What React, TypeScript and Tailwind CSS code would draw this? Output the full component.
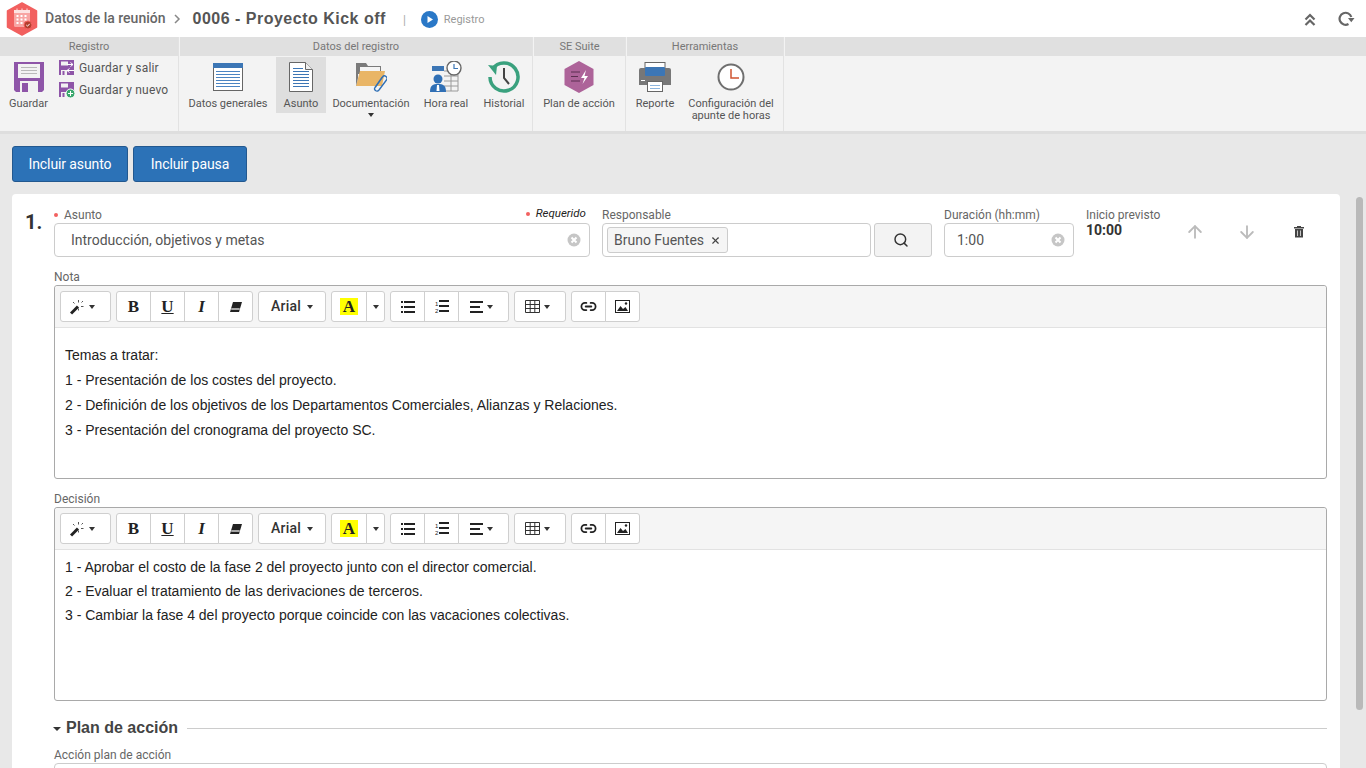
import React from 'react';
import { Search, X, ArrowUp, ArrowDown, Link2 } from 'lucide-react';

const SaveIcon = () => (
  <svg width="30" height="30" viewBox="0 0 30 30">
    <path d="M0 0h30v28l-2 2H2l-2-2z" fill="#8e55a8" />
    <rect x="4" y="2" width="22" height="14" fill="#f2f2f2" />
    <path d="M7 5.500h16M7 8.500h16M7 11.500h16" stroke="#b9b9b9" />
    <rect x="6" y="19" width="18" height="11" fill="#f2f2f2" />
    <rect x="8" y="21" width="6" height="9" fill="#8e55a8" />
  </svg>
);

const SmallSave = ({ plus }: { plus?: boolean }) => (
  <svg width="16" height="16" viewBox="0 0 16 16">
    <path d="M0 0h15v15H0z" fill="#8e55a8" />
    <rect x="2" y="1.500" width="7" height="4" fill="#f2f2f2" />
    <rect x="2" y="10" width="6" height="5" fill="#f2f2f2" />
    <rect x="3.500" y="11" width="2" height="4" fill="#8e55a8" />
    {plus ? (
      <g>
        <circle cx="11.500" cy="11.500" r="4.500" fill="#3aa76d" stroke="#fff" />
        <path d="M11.500 9v5M9 11.500h5" stroke="#fff" />
      </g>
    ) : (
      <path d="M8 4.500h6M11.500 2.500l2.500 2-2.500 2M15 10.500H8M10.500 8.500l-2.500 2 2.500 2" stroke="#fff" fill="none" />
    )}
  </svg>
);

const GeneralIcon = () => (
  <svg width="30" height="28" viewBox="0 0 30 28">
    <rect x="0.500" y="0.500" width="29" height="27" fill="#fff" stroke="#666" />
    <rect x="0" y="0" width="30" height="5" fill="#3c76b5" />
    <path d="M3 8.500h24M3 11.500h24M3 14.500h24M3 17.500h24M3 20.500h24M3 23.500h24" stroke="#4b84c2" />
  </svg>
);

const DocIcon = () => (
  <svg width="24" height="30" viewBox="0 0 24 30">
    <path d="M.5.500h16l7 7v22H.5z" fill="#fff" stroke="#666" />
    <path d="M16.500.500v7h7" fill="#eee" stroke="#666" />
    <path d="M4 6.500h10M4 9.500h16M4 12.500h16M4 15.500h16M4 18.500h16M4 21.500h16M4 24.500h16" stroke="#3c76b5" />
  </svg>
);

const FolderIcon = () => (
  <svg width="32" height="30" viewBox="0 0 32 30">
    <path d="M1 1h10l2 3h13v8H1z" fill="#7a7a7a" />
    <rect x="5" y="5" width="20" height="4" fill="#f4f4f4" />
    <path d="M1 24L5 9h25l-3 15z" fill="#e9b566" />
    <path d="M1 24V4h2v12z" fill="#7a7a7a" />
    <path d="M20.500 25l7-10a2.500 2.500 0 0 1 4 3l-7.500 10a2.200 2.200 0 0 1-4-2.500l7-10" fill="#f3f3f3" fillOpacity="0" stroke="#2f6fb5" strokeWidth="1.400" />
  </svg>
);

const RealTimeIcon = () => (
  <svg width="32" height="32" viewBox="0 0 32 32">
    <rect x="2" y="5" width="12" height="5" fill="#3c76b5" />
    <path d="M14 10h14v20H14M14 15h14M14 20h14M14 25h14M21 10v20" fill="none" stroke="#9a9a9a" />
    <circle cx="24" cy="7" r="7" fill="#fff" stroke="#666" strokeWidth="1.400" />
    <path d="M24 3v4.500h4" fill="none" stroke="#3c76b5" strokeWidth="1.200" />
    <circle cx="8" cy="18" r="4.500" fill="#2f6fb5" />
    <path d="M0 31c0-7 3-8 8-8s8 1 8 8z" fill="#2f6fb5" />
    <path d="M7 24h2l.5 6h-3z" fill="#fff" />
  </svg>
);

const HistoryIcon = () => (
  <svg width="32" height="32" viewBox="0 0 32 32">
    <path d="M4.500 8a14 14 0 1 1-2.500 8" fill="none" stroke="#3aa17e" strokeWidth="3.500" />
    <path d="M0 4l9 1-1 9z" fill="#3aa17e" />
    <path d="M16 7v10l5 6" fill="none" stroke="#444" strokeWidth="2" />
  </svg>
);

const PlanIcon = () => (
  <svg width="30" height="32" viewBox="0 0 30 32">
    <path d="M15 0l14.500 8v16L15 32 .5 24V8z" fill="#ad6399" />
    <path d="M7 11h9M7 15.500h7M7 20h9" stroke="#5b2f50" />
    <path d="M22 9l-5 8h3.500l-2 6 5.500-8h-3.500z" fill="#fff" />
  </svg>
);

const PrintIcon = () => (
  <svg width="32" height="30" viewBox="0 0 32 30">
    <rect x="6" y="0.500" width="20" height="8" fill="#fff" stroke="#666" />
    <path d="M2 6h28a2 2 0 0 1 2 2v15H0V8a2 2 0 0 1 2-2z" fill="#777" />
    <rect x="6" y="5" width="20" height="9" rx="1" fill="#3c76b5" />
    <rect x="2" y="18" width="4" height="1" fill="#fff" />
    <rect x="8.500" y="19.500" width="15" height="10" fill="#fff" stroke="#666" />
    <path d="M11 23.500h10M11 26.500h10" stroke="#8db6df" />
  </svg>
);

const ClockIcon = () => (
  <svg width="28" height="28" viewBox="0 0 28 28">
    <circle cx="14" cy="14" r="12.500" fill="#fff" stroke="#6f6f6f" strokeWidth="2" />
    <path d="M14 6v9h8" fill="none" stroke="#cf5430" strokeWidth="1.500" />
  </svg>
);

const LogoIcon = () => (
  <svg width="32" height="34" viewBox="0 0 32 34">
    <path d="M16 1l14.500 8v16L16 33 1.500 25V9z" fill="#f2605f" stroke="#f2605f" strokeLinejoin="round" strokeWidth="1.500" />
    <rect x="8" y="8" width="16" height="17" rx="1.500" fill="#f8a5a3" />
    <rect x="8" y="8" width="16" height="3" fill="#fde3e2" />
    <path d="M11 6.500v3M16 6.500v3M21 6.500v3" stroke="#fde3e2" />
    <path d="M10.500 14h2M14.500 14h2M18.500 14h2M10.500 17.500h2M14.500 17.500h2M18.500 17.500h2M10.500 21h2M14.500 21h2" stroke="#fff" strokeWidth="2" />
    <circle cx="22" cy="23" r="4" fill="#b33d2c" stroke="#f2605f" />
    <path d="M20.300 23l1.200 1.200 2.200-2.400" fill="none" stroke="#fff" />
  </svg>
);

const ClearIcon = () => (
  <svg width="14" height="14" viewBox="0 0 14 14" className="ml-auto shrink-0">
    <circle cx="7" cy="7" r="6.500" fill="#c6c6c6" />
    <path d="M4.500 4.500l5 5M9.500 4.500l-5 5" stroke="#fff" strokeWidth="2" />
  </svg>
);

const Wand = () => (
  <svg width="16" height="16" viewBox="0 0 16 16">
    <path d="M1 14.500l7-7" stroke="#222" strokeWidth="3" />
    <path d="M8.500 1v2.500M8.500 9.500v2M3 3l1.500 1.500M11.500 3.500L13 2M11 7.500h2.500" stroke="#555" strokeWidth="1" />
  </svg>
);

const EraserIcon = () => (
  <svg width="12" height="12" viewBox="0 0 12 12">
    <path d="M3 1h9L9 11H0z" fill="#222" />
    <path d="M1.200 8h8.500" stroke="#fff" strokeWidth="1.200" />
  </svg>
);

const ListIcon = () => (
  <svg width="14" height="12" viewBox="0 0 14 12" fill="#222">
    <rect x="0" y="0" width="2" height="2" />
    <rect x="0" y="5" width="2" height="2" />
    <rect x="0" y="10" width="2" height="2" />
    <rect x="3" y="0" width="11" height="2" />
    <rect x="3" y="5" width="11" height="2" />
    <rect x="3" y="10" width="11" height="2" />
  </svg>
);

const OrderedIcon = () => (
  <svg width="14" height="13" viewBox="0 0 14 13" fill="#222">
    <text x="0" y="6" fontSize="6" fontFamily="Liberation Sans">1</text>
    <text x="0" y="13" fontSize="6" fontFamily="Liberation Sans">2</text>
    <rect x="4" y="0" width="10" height="2" />
    <rect x="4" y="5" width="10" height="2" />
    <rect x="4" y="10" width="10" height="2" />
  </svg>
);

const AlignIcon = () => (
  <svg width="13" height="12" viewBox="0 0 13 12" fill="#222">
    <rect x="0" y="0" width="13" height="2" />
    <rect x="0" y="5" width="10" height="2" />
    <rect x="0" y="10" width="13" height="2" />
  </svg>
);

const GridIcon = () => (
  <svg width="15" height="13" viewBox="0 0 15 13">
    <path d="M.5.500h14v12H.5zM.5 4.500h14M.5 8.500h14M5.200.500v12M9.800.500v12" fill="none" stroke="#333" />
  </svg>
);

const PictureIcon = () => (
  <svg width="15" height="13" viewBox="0 0 15 13">
    <rect x="0.500" y="0.500" width="14" height="12" fill="#fff" stroke="#222" />
    <path d="M2 11l3.500-5 2.500 3 2.500-2 2.500 4z" fill="#222" />
    <circle cx="11" cy="3.500" r="1.200" fill="#222" />
  </svg>
);

const TrashIcon = () => (
  <svg width="10" height="12" viewBox="0 0 10 12" fill="#444">
    <rect x="0" y="1" width="10" height="1.500" />
    <rect x="3" y="0" width="4" height="1.500" />
    <path d="M1 3h8v8.500H1z" />
    <path d="M3.500 4.500v5.500M6.500 4.500v5.500" stroke="#fff" strokeWidth="0.700" />
  </svg>
);

const Refresh = () => (
  <svg width="18" height="16" viewBox="0 0 18 16">
    <path d="M10.500 13A6 6 0 1 1 13.300 6" fill="none" stroke="#666" strokeWidth="2.200" />
    <path d="M10 7h6.500l-3.250 4.200z" fill="#666" />
  </svg>
);

const DoubleUp = () => (
  <svg width="12" height="14" viewBox="0 0 12 14">
    <path d="M1.500 6.500L6 2l4.500 4.500M1.500 12L6 7.500l4.500 4.500" fill="none" stroke="#666" strokeWidth="2.200" />
  </svg>
);

const Caret = ({ className = '' }: { className?: string }) => (
  <span className={`inline-block w-0 h-0 border-x-[3px] border-x-transparent border-t-[4px] border-t-[#333] ${className}`} />
);

const RibbonButton = ({ label, icon, active, w, caret }: { label: React.ReactNode; icon: React.ReactNode; active?: boolean; w: string; caret?: boolean }) => (
  <div className={`flex flex-col items-center ${w}`}>
    <div className={`w-full h-[56px] flex flex-col items-center ${active ? 'bg-[#dedede]' : ''}`}>
      <div className="h-[38px] shrink-0 flex items-center justify-center mt-[1px]">{icon}</div>
      <div className="text-[11px] leading-[12px] text-[#555] text-center whitespace-nowrap mt-[2px]">{label}</div>
    </div>
    {caret && <Caret />}
  </div>
);

const RibbonGroup = ({ title, w, children }: { title: string; w: string; children: React.ReactNode }) => (
  <div className={`${w} shrink-0 flex flex-col border-r border-r-[#e2e2e2]`}>
    <div className="h-[19px] bg-[#e0e0e0] text-[11px] leading-[19px] text-[#777] text-center">{title}</div>
    <div className="flex-1 flex">{children}</div>
  </div>
);

const ToolBtn = ({ w, children, first, last, className = '' }: { w: string; children: React.ReactNode; first?: boolean; last?: boolean; className?: string }) => (
  <div className={`${w} h-[31px] bg-white border border-[#cfcfcf] flex items-center justify-center text-[#222] -ml-px first:ml-0 ${first ? 'rounded-l-[3px]' : ''} ${last ? 'rounded-r-[3px]' : ''} ${className}`}>
    {children}
  </div>
);

const serif = "font-['Liberation_Serif',serif] text-[17px] leading-[17px] text-[#222]";

const EditorToolbar = () => (
  <div className="h-[42px] shrink-0 bg-[#f5f5f5] border-b border-[#e2e2e2] rounded-t-[3px] flex items-start pt-[5px] pl-[5px] gap-[5px]">
    <div className="flex">
      <ToolBtn w="w-[51px]" first last className="pr-[7px]">
        <Wand />
        <Caret className="ml-[3px]" />
      </ToolBtn>
    </div>
    <div className="flex">
      <ToolBtn w="w-[35px]" first><span className={`${serif} font-bold`}>B</span></ToolBtn>
      <ToolBtn w="w-[35px]"><span className={`${serif} font-bold underline`}>U</span></ToolBtn>
      <ToolBtn w="w-[35px]"><span className={`${serif} font-bold italic`}>I</span></ToolBtn>
      <ToolBtn w="w-[35px]" last><EraserIcon /></ToolBtn>
    </div>
    <div className="flex">
      <ToolBtn w="w-[68px]" first last>
        <span className="text-[14px] font-medium text-[#333] mr-[6px] tracking-[0.200px]">Arial</span>
        <Caret />
      </ToolBtn>
    </div>
    <div className="flex">
      <ToolBtn w="w-[36px]" first>
        <span className={`${serif} font-bold px-[2.500px] bg-[#ffff00]`}>A</span>
      </ToolBtn>
      <ToolBtn w="w-[19px]" last><Caret /></ToolBtn>
    </div>
    <div className="flex">
      <ToolBtn w="w-[35px]" first><ListIcon /></ToolBtn>
      <ToolBtn w="w-[35px]"><OrderedIcon /></ToolBtn>
      <ToolBtn w="w-[51px]" last className="pr-[4px]">
        <AlignIcon />
        <Caret className="ml-[4px]" />
      </ToolBtn>
    </div>
    <div className="flex">
      <ToolBtn w="w-[52px]" first last className="pr-[6px]">
        <GridIcon />
        <Caret className="ml-[4px]" />
      </ToolBtn>
    </div>
    <div className="flex">
      <ToolBtn w="w-[35px]" first><Link2 size={17} strokeWidth={2.500} /></ToolBtn>
      <ToolBtn w="w-[35px]" last><PictureIcon /></ToolBtn>
    </div>
  </div>
);

const Editor = ({ lines, leading, pt }: { lines: string[]; leading: string; pt: string }) => (
  <div className="h-[194px] border border-[#a9a9a9] rounded-[3px] flex flex-col bg-white">
    <EditorToolbar />
    <div className={`${pt} pl-[10px] font-['Liberation_Sans',sans-serif] text-[14px] ${leading} text-[#222]`}>
      {lines.map((l) => (
        <div key={l}>{l}</div>
      ))}
    </div>
  </div>
);

const Label = ({ children }: { children: React.ReactNode }) => (
  <div className="text-[12px] leading-[14px] text-[#666]">{children}</div>
);

export default function App() {
  return (
    <div className="w-[1366px] h-[768px] overflow-hidden flex flex-col bg-[#e8e8e8] font-['Roboto',sans-serif]">
      {/* Title bar */}
      <header className="h-[37px] shrink-0 bg-white flex items-center pl-[6px]">
        <LogoIcon />
        <span className="ml-[7px] text-[14px] font-medium text-[#666]">Datos de la reunión</span>
        <svg width="8" height="10" viewBox="0 0 8 10" className="ml-[8px]">
          <path d="M2 1l4 4-4 4" fill="none" stroke="#888" strokeWidth="1.500" />
        </svg>
        <span className="ml-[11px] font-['Liberation_Sans',sans-serif] text-[16px] font-bold text-[#555] tracking-[0.500px]">0006 - Proyecto Kick off</span>
        <span className="ml-[17px] text-[12px] text-[#aaa] mt-[2px]">|</span>
        <svg width="17" height="17" viewBox="0 0 17 17" className="ml-[15px] mt-[2px]">
          <circle cx="8.500" cy="8.500" r="8.500" fill="#2a78c7" />
          <path d="M6.500 5v7l5.500-3.500z" fill="#fff" />
        </svg>
        <span className="ml-[6px] text-[11px] text-[#999] mt-[3px]">Registro</span>
        <div className="ml-auto flex items-center">
          <div className="mt-[3px]"><DoubleUp /></div>
          <div className="ml-[22px] mr-[10px]"><Refresh /></div>
        </div>
      </header>

      {/* Ribbon */}
      <div className="h-[97px] shrink-0 flex bg-[#f3f3f3] border-b-[3px] border-b-[#dedede]">
        <RibbonGroup title="Registro" w="w-[179px] mr-[1px]">
          <div className="w-[57px] flex flex-col items-center pt-[6px]">
            <SaveIcon />
            <div className="text-[11px] text-[#555] leading-[12px] mt-[6px]">Guardar</div>
          </div>
          <div className="flex flex-col pt-[4px] ml-[2px] gap-[6px]">
            <div className="flex items-center gap-[4px] h-[16px]">
              <SmallSave />
              <span className="text-[12px] text-[#555] tracking-[0.200px]">Guardar y salir</span>
            </div>
            <div className="flex items-center gap-[4px] h-[16px]">
              <SmallSave plus />
              <span className="text-[12px] text-[#555] tracking-[0.200px]">Guardar y nuevo</span>
            </div>
          </div>
        </RibbonGroup>
        <RibbonGroup title="Datos del registro" w="w-[353px] mr-[1px]">
          <div className="flex pt-[1px] pl-[4px]">
            <RibbonButton w="w-[88px]" label="Datos generales" icon={<GeneralIcon />} />
            <RibbonButton w="w-[50px] ml-[4px]" label="Asunto" active icon={<DocIcon />} />
            <RibbonButton w="w-[88px] ml-[1px]" label="Documentación" caret icon={<FolderIcon />} />
            <RibbonButton w="w-[50px] ml-[6px]" label="Hora real" icon={<RealTimeIcon />} />
            <RibbonButton w="w-[48px] ml-[9px]" label="Historial" icon={<HistoryIcon />} />
          </div>
        </RibbonGroup>
        <RibbonGroup title="SE Suite" w="w-[92px] mr-[1px]">
          <div className="flex pt-[1px] pl-[4px]">
            <RibbonButton w="w-[82px]" label="Plan de acción" icon={<PlanIcon />} />
          </div>
        </RibbonGroup>
        <RibbonGroup title="Herramientas" w="w-[157px] mr-[1px]">
          <div className="flex pt-[1px]">
            <RibbonButton w="w-[56px]" label="Reporte" icon={<PrintIcon />} />
            <RibbonButton w="w-[92px] ml-[2px]" label={<>Configuración del<br />apunte de horas</>} icon={<ClockIcon />} />
          </div>
        </RibbonGroup>
        <div className="flex-1 h-[19px] bg-[#e0e0e0]" />
      </div>

      {/* Content */}
      <div className="flex-1 min-h-0 relative pl-[12px] pt-[12px]">
        <div className="flex gap-[5px]">
          <button className="w-[116px] h-[36px] rounded-[3px] bg-[#2c72b7] border border-[#22588f] text-white text-[14px] tracking-[-0.100px]">Incluir asunto</button>
          <button className="w-[114px] h-[36px] rounded-[3px] bg-[#2c72b7] border border-[#22588f] text-white text-[14px] tracking-[-0.100px]">Incluir pausa</button>
        </div>

        <div className="mt-[12px] w-[1328px] h-[600px] bg-white rounded-[4px] flex pt-[14px]">
          <div className="w-[42px] pl-[13px] pt-[2px] text-[20px] leading-[24px] font-bold text-[#333] shrink-0">1.</div>
          <div className="w-[1273px] flex flex-col">
            {/* Field row */}
            <div className="flex h-[49px]">
              <div className="w-[536px] flex flex-col">
                <div className="flex items-center justify-between h-[14px] pr-[4px]">
                  <div className="flex items-center">
                    <span className="w-[4px] h-[4px] rounded-full bg-[#f2605f] mr-[6px]" />
                    <Label>Asunto</Label>
                  </div>
                  <div className="flex items-center -mt-[2px]">
                    <span className="w-[4px] h-[4px] rounded-full bg-[#f2605f] mr-[6px]" />
                    <span className="text-[11.500px] italic text-[#222]">Requerido</span>
                  </div>
                </div>
                <div className="mt-[1px] h-[34px] border border-[#ccc] rounded-[4px] flex items-center pl-[16px] pr-[8px] text-[14px] text-[#555]">
                  <span>Introducción, objetivos y metas</span>
                  <ClearIcon />
                </div>
              </div>
              <div className="w-[269px] ml-[12px] flex flex-col">
                <Label>Responsable</Label>
                <div className="mt-[1px] h-[34px] border border-[#ccc] rounded-[4px] flex items-center pl-[4px]">
                  <div className="h-[26px] px-[6px] bg-[#f5f5f5] border border-[#ccc] rounded-[3px] flex items-center text-[14px] text-[#555]">
                    Bruno Fuentes
                    <X size={11} strokeWidth={2.500} className="ml-[6px] text-[#444]" />
                  </div>
                </div>
              </div>
              <div className="w-[58px] ml-[3px] h-[34px] mt-[15px] bg-[#f3f3f3] border border-[#ccc] rounded-[3px] flex items-center justify-center pr-[4px]">
                <Search size={16} strokeWidth={2.200} className="text-[#333]" />
              </div>
              <div className="w-[130px] ml-[12px] flex flex-col">
                <Label>Duración (hh:mm)</Label>
                <div className="mt-[1px] h-[34px] border border-[#ccc] rounded-[4px] flex items-center pl-[12px] pr-[8px] text-[14px] text-[#555]">
                  <span>1:00</span>
                  <ClearIcon />
                </div>
              </div>
              <div className="w-[90px] ml-[12px] flex flex-col">
                <Label>Inicio previsto</Label>
                <div className="text-[14px] leading-[16px] font-bold text-[#333]">10:00</div>
              </div>
              <div className="flex items-start pt-[14px]">
                <ArrowUp size={20} strokeWidth={2.200} className="text-[#bbb] ml-[9px]" />
                <ArrowDown size={20} strokeWidth={2.200} className="text-[#bbb] ml-[32px]" />
                <div className="ml-[37px] mt-[4px]"><TrashIcon /></div>
              </div>
            </div>

            <div className="mt-[13px]"><Label>Nota</Label></div>
            <div className="mt-[1px]">
              <Editor
                pt="pt-[15px]"
                leading="leading-[25px]"
                lines={[
                  'Temas a tratar:',
                  '1 - Presentación de los costes del proyecto.',
                  '2 - Definición de los objetivos de los Departamentos Comerciales, Alianzas y Relaciones.',
                  '3 - Presentación del cronograma del proyecto SC.',
                ]}
              />
            </div>

            <div className="mt-[13px]"><Label>Decisión</Label></div>
            <div className="mt-[1px]">
              <Editor
                pt="pt-[5px]"
                leading="leading-[24px]"
                lines={[
                  '1 - Aprobar el costo de la fase 2 del proyecto junto con el director comercial.',
                  '2 - Evaluar el tratamiento de las derivaciones de terceros.',
                  '3 - Cambiar la fase 4 del proyecto porque coincide con las vacaciones colectivas.',
                ]}
              />
            </div>

            <div className="mt-[17px] flex items-center h-[20px]">
              <span className="inline-block w-0 h-0 border-x-[4px] border-x-transparent border-t-[4px] border-t-[#333] mt-[1px] -ml-[1px]" />
              <span className="ml-[5px] font-['Liberation_Sans',sans-serif] text-[16px] font-bold text-[#444]">Plan de acción</span>
              <div className="flex-1 ml-[9px] h-px bg-[#ccc]" />
            </div>
            <div className="mt-[10px]"><Label>Acción plan de acción</Label></div>
            <div className="mt-[1px] h-[34px] border border-[#ccc] rounded-[4px]" />
          </div>
        </div>

        {/* Scrollbar */}
        <div className="absolute left-[1356px] top-[63px] w-[7px] h-[513px] bg-[#b9b9b9] rounded-full" />
      </div>
    </div>
  );
}
